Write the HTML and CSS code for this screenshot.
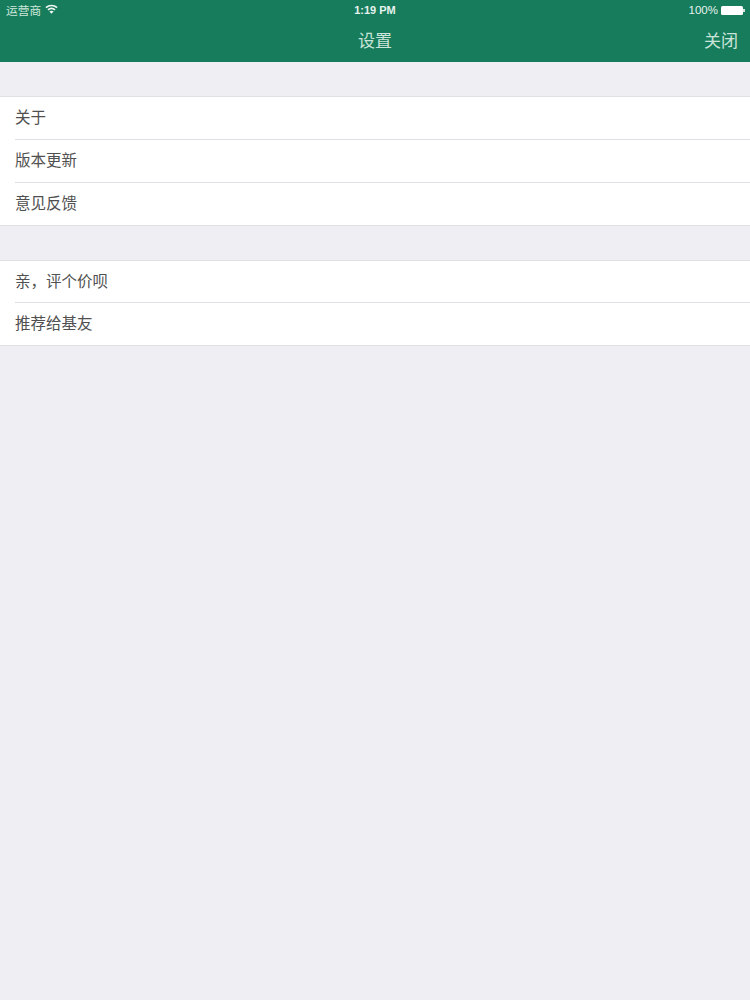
FILE: index.html
```html
<!DOCTYPE html>
<html lang="zh-CN">
<head>
<meta charset="utf-8">
<title>设置</title>
<link rel="stylesheet" href="styles.css">
</head>
<body>
<header class="header">
  <div class="status">
    <div class="status-left">
      <span class="carrier">运营商</span>
      <svg class="wifi" width="13" height="10" viewBox="0 0 14 10"><path d="M1 3.6C4.4 0.4 9.6 0.4 13 3.6" class="arc"/><path d="M3.2 5.9C5.4 4 8.6 4 10.8 5.9" class="arc"/><path d="M7 10L4.7 7.7C6 6.5 8 6.5 9.3 7.7Z" class="dot"/></svg>
    </div>
    <div class="time">1:19 PM</div>
    <div class="status-right">
      <span class="pct">100%</span>
      <span class="battery"></span>
      <span class="battery-tip"></span>
    </div>
  </div>
  <div class="nav">
    <div class="nav-title">设置</div>
    <div class="nav-close">关闭</div>
  </div>
</header>
<main class="content">
  <ul class="group">
    <li class="row">关于</li>
    <li class="row">版本更新</li>
    <li class="row">意见反馈</li>
  </ul>
  <ul class="group group-tight">
    <li class="row">亲，评个价呗</li>
    <li class="row">推荐给基友</li>
  </ul>
</main>
</body>
</html>
```
FILE: styles.css
```css
* { box-sizing: border-box; }
html, body { margin: 0; padding: 0; height: 100%; }
body {
  background: #efeef3;
  font-family: "Noto Sans CJK SC", "Liberation Sans", sans-serif;
  overflow: hidden;
}
.header {
  height: 62px;
  background: #177c5b;
  color: #dff0e9;
  display: flex;
  flex-direction: column;
}
.status {
  height: 20px;
  display: grid;
  grid-template-columns: 1fr auto 1fr;
  align-items: start;
  padding: 0 5px;
  font-size: 11.7px;
  line-height: 20px;
}
.status-left {
  display: flex;
  align-items: center;
  gap: 4px;
  height: 20px;
  padding-left: 1px;
}
.carrier { color: #cfe7dd; line-height: 20px; height: 20px; }
.wifi { display: block; margin-bottom: 2px; }
.arc { fill: none; stroke: #eef7f3; stroke-width: 1.8; }
.dot { fill: #eef7f3; }
.time {
  font-family: "Liberation Sans", sans-serif;
  font-size: 11px;
  font-weight: 700;
  color: #e6f3ee;
}
.status-right {
  display: flex;
  align-items: center;
  justify-content: flex-end;
  height: 20px;
}
.pct {
  font-family: "Liberation Sans", sans-serif;
  font-size: 11.5px;
  color: #e6f3ee;
  margin-right: 3px;
}
.battery {
  width: 22px;
  height: 9px;
  background: #fff;
  border-radius: 1.5px;
  display: block;
}
.battery-tip {
  width: 2px;
  height: 3px;
  background: #cfe7dd;
  display: block;
}
.nav {
  flex: 1;
  display: flex;
  position: relative;
  justify-content: center;
}
.nav-title {
  font-size: 17px;
  line-height: 40px;
  color: #cbe4d9;
}
.nav-close {
  position: absolute;
  right: 12px;
  top: 0;
  font-size: 17px;
  line-height: 40px;
  color: #cbe4d9;
}
.content {
  padding-top: 34px;
  display: flex;
  flex-direction: column;
  gap: 34px;
}
.group {
  list-style: none;
  margin: 0;
  padding: 0 0 0 15px;
  background: #fff;
  border-top: 1px solid #e0e0e4;
  border-bottom: 1px solid #e0e0e4;
}
.row {
  height: 43px;
  padding-right: 15px;
  font-size: 15.5px;
  line-height: 39px;
  color: #505050;
  border-bottom: 1px solid #e0e0e4;
}
.row:last-child {
  height: 42px;
  border-bottom: 0;
}
.group-tight .row { height: 42px; }
```
